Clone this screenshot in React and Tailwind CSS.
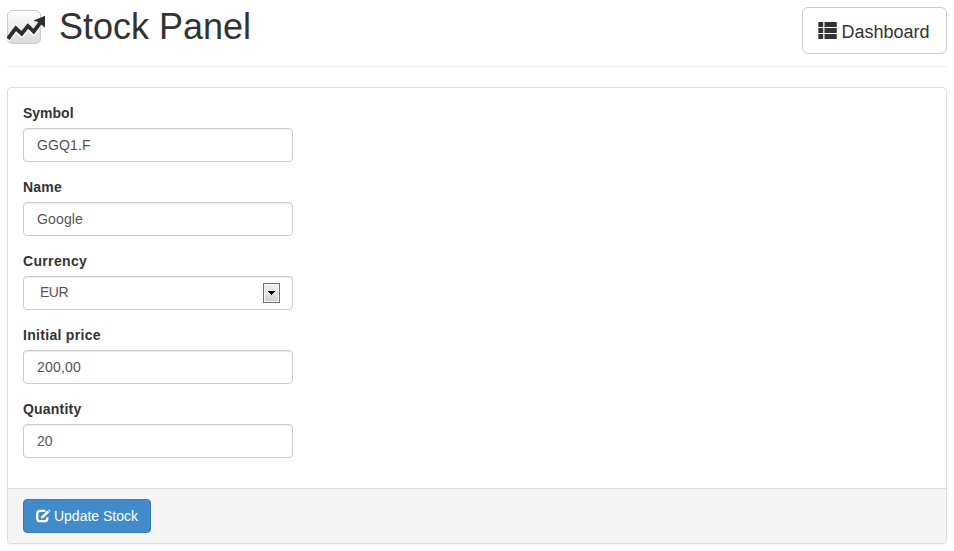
import React from "react";

function StockLogo() {
  return (
    <svg width="39" height="36" viewBox="0 0 39 36" className="block shrink-0">
      <defs>
        <linearGradient id="tile" x1="0" y1="0" x2="0" y2="1">
          <stop offset="0" stopColor="#ffffff" />
          <stop offset="1" stopColor="#dadada" />
        </linearGradient>
      </defs>
      <rect x="0.5" y="0.5" width="33" height="33" rx="4.5" fill="url(#tile)" stroke="#cbcbcb" />
      <path d="M1.2 30.5 L9 20.5 L14.7 26 L21 18.5 L26.7 24 L34 14" fill="none" stroke="#fff" strokeWidth="3.2" />
      <path d="M0.9 28.8 L8.8 18.3 L14.7 23.7 L20.9 16 L26.7 21.7 L34.3 11.3" fill="none" stroke="#2d2d2d" strokeWidth="3.8" />
      <path d="M38 5.8 L38 17.8 L35.5 15.5 L30.5 11.8 L26.2 10.8 Z" fill="#2d2d2d" />
    </svg>
  );
}

function ListIcon() {
  return (
    <svg width="19" height="17" viewBox="0 0 19 17" fill="#333" className="block shrink-0">
      <rect x="0.3" y="0" width="4.9" height="5" rx="0.6" />
      <rect x="6.5" y="0" width="12.3" height="5" rx="0.6" />
      <rect x="0.3" y="6" width="4.9" height="5" rx="0.6" />
      <rect x="6.5" y="6" width="12.3" height="5" rx="0.6" />
      <rect x="0.3" y="12" width="4.9" height="5" rx="0.6" />
      <rect x="6.5" y="12" width="12.3" height="5" rx="0.6" />
    </svg>
  );
}

function EditIcon() {
  return (
    <svg width="15" height="14" viewBox="0 0 15 14" className="block shrink-0">
      <path d="M9.4 1.9 H4.2 Q1.2 1.9 1.2 4.9 V9.4 Q1.2 12.2 4.2 12.2 H8.6 Q11.4 12.2 11.4 9.4 V8.2" fill="none" stroke="#fff" strokeWidth="2.2" />
      <path d="M5 9.8 L5.6 7.2 L11.4 1.6 L13.2 3.3 L7.4 9.1 Z" fill="#fff" />
      <path d="M12 1 L12.6 0.4 L14.6 2.1 L13.9 2.8 Z" fill="#fff" />
    </svg>
  );
}

const control =
  "flex h-[34px] w-[270px] items-center rounded border border-[#ccc] bg-white px-[13px] text-sm leading-5 text-[#555] shadow-[inset_0_1px_1px_rgba(0,0,0,0.075)]";

function Label({ className = "", children }) {
  return <label className={"mb-[5px] block text-sm leading-5 font-bold " + className}>{children}</label>;
}

function Field({ label, value, labelClass, valueClass = "" }) {
  return (
    <div className="mb-[15px]">
      <Label className={labelClass}>{label}</Label>
      <div className={control}>
        <span className={valueClass}>{value}</span>
      </div>
    </div>
  );
}

function SelectField({ label, value, labelClass }) {
  return (
    <div className="mb-[15px]">
      <Label className={labelClass}>{label}</Label>
      <div className={control + " justify-between"}>
        <span className="mb-[2px] pl-[3px] tracking-[-0.5px]">{value}</span>
        <span className="mr-[-1px] flex h-5 w-[17px] items-center justify-center border border-[#707070] bg-linear-to-b from-[#f0f0f0] via-[#e4e4e4] to-[#cdcdcd] shadow-[inset_0_0_0_1px_#f5f5f5]">
          <svg width="7" height="4" viewBox="0 0 7 4" className="block">
            <path d="M0 0 H7 V1 H6 V2 H5 V3 H4 V4 H3 V3 H2 V2 H1 V1 H0 Z" fill="#000" />
          </svg>
        </span>
      </div>
    </div>
  );
}

export default function App() {
  return (
    <div className="h-[551px] overflow-hidden bg-white px-[7px] pt-[7px] font-['Liberation_Sans',Arial,sans-serif] text-[#333]">
      <header className="flex h-[60px] items-start justify-between border-b border-[#eee]">
        <div className="flex items-start pt-[3px]">
          <StockLogo />
          <h1 className="-mt-[3px] ml-[13px] text-4xl leading-10 font-normal">Stock Panel</h1>
        </div>
        <button className="flex h-[47px] w-[145px] items-center justify-center gap-1 rounded-md border border-[#ccc] bg-white pr-px text-lg">
          <ListIcon />
          <span className="pt-[2px] leading-6">Dashboard</span>
        </button>
      </header>
      <main className="mt-5 overflow-hidden rounded border border-[#ddd] shadow-[0_1px_1px_rgba(0,0,0,0.05)]">
        <div className="p-[15px]">
          <Field label="Symbol" value="GGQ1.F" valueClass="tracking-[0.15px]" />
          <Field label="Name" value="Google" labelClass="tracking-[0.2px]" valueClass="tracking-[0.15px]" />
          <SelectField label="Currency" value="EUR" labelClass="tracking-[0.33px]" />
          <Field label="Initial price" value="200,00" labelClass="tracking-[0.3px]" valueClass="tracking-[0.2px]" />
          <Field label="Quantity" value="20" labelClass="tracking-[0.2px]" />
        </div>
        <footer className="border-t border-[#ddd] bg-[#f5f5f5] px-[15px] py-2.5">
          <button className="flex h-[34px] w-32 items-center justify-center gap-[3px] rounded border border-[#357ebd] bg-[#428bca] text-sm leading-5 text-white">
            <EditIcon />
            <span>Update Stock</span>
          </button>
        </footer>
      </main>
    </div>
  );
}
